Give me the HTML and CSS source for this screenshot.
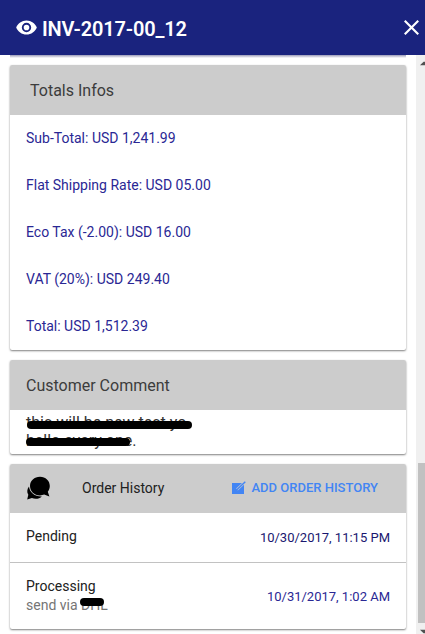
FILE: index.html
```
<!DOCTYPE html>
<html lang="en">
<head>
    <meta charset="UTF-8">
    <meta name="viewport" content="width=device-width, initial-scale=1.0">
    <title>Invoice</title>
    <link rel="stylesheet" href="styles.css">
</head>
<body>
    <div class="header">
        <svg class="eye" viewBox="1 4 22 16"><path d="M12 4.500C7 4.500 2.730 7.610 1 12c1.730 4.390 6 7.500 11 7.500s9.270-3.110 11-7.500c-1.730-4.390-6-7.500-11-7.500zM12 17a5 5 0 1 1 0-10 5 5 0 0 1 0 10zm0-8a3 3 0 1 0 0 6 3 3 0 0 0 0-6z"/></svg>
        <h1 class="title">INV-2017-00_12</h1>
        <svg class="close" viewBox="5 5 14 14"><path d="M19 6.410 17.590 5 12 10.590 6.410 5 5 6.410 10.590 12 5 17.590 6.410 19 12 13.410 17.590 19 19 17.590 13.410 12z"/></svg>
    </div>
    <div class="main">
        <div class="content">
            <div class="card totals">
                <div class="card-head indent">Totals Infos</div>
                <div class="total">Sub-Total: USD 1,241.99</div>
                <div class="total">Flat Shipping Rate: USD 05.00</div>
                <div class="total">Eco Tax (-2.00): USD 16.00</div>
                <div class="total">VAT (20%): USD 249.40</div>
                <div class="total">Total: USD 1,512.39</div>
            </div>
            <div class="card comment">
                <div class="card-head">Customer Comment</div>
                <div class="comment-text">
                    <div class="line"><span>this will be new test yo</span><i class="mark mark-one"></i></div>
                    <div class="line"><span>hello every one.</span><i class="mark mark-two"></i></div>
                </div>
            </div>
            <div class="card history">
                <div class="history-head">
                    <svg class="chat" viewBox="0 0 24 24">
                        <path d="M3 10.500C1 13.200.7 16.200 2.300 18.700L1.200 23.500l4.700-1.500c3.300 1.500 7.600.9 10-1.600C9 20.600 3.700 16.800 3 10.500z"/>
                        <path d="M14 .8C8.300.8 4 4.800 4 9.900s4.300 9.500 10 9.500c1.500 0 2.900-.3 4.200-.8l5.200 2-1.600-4.800c1.300-1.600 2-3.500 2-5.700C23.800 4.800 19.600.8 14 .8z"/>
                    </svg>
                    <div class="history-title">Order History</div>
                    <div class="add">
                        <svg class="edit" viewBox="0 0 14 13">
                            <path d="M0 2h12v11H0z" fill="#4285f4"/>
                            <path d="M5 8.500 13 1" stroke="#ccc" stroke-width="2.500"/>
                            <path d="M4 9.500 13.300.7" stroke="#4285f4" stroke-width="1.400"/>
                        </svg>
                        <span>ADD ORDER HISTORY</span>
                    </div>
                </div>
                <div class="row pending">
                    <div class="status">Pending</div>
                    <div class="date dark">10/30/2017, 11:15 PM</div>
                </div>
                <div class="row processing">
                    <div class="status">Processing
                        <div class="note">send via <span class="carrier">DHL<i class="mark mark-three"></i></span></div>
                    </div>
                    <div class="date">10/31/2017, 1:02 AM</div>
                </div>
            </div>
        </div>
        <div class="scrollbar">
            <svg class="arrow" viewBox="0 0 7 5"><path d="M0 5 5 0h2v5z"/></svg>
            <div class="thumb"></div>
            <svg class="arrow-down" viewBox="0 0 7 5"><path d="M0 0h7v5H5z"/></svg>
        </div>
    </div>
</body>
</html>
```
FILE: styles.css
```
*{
    margin: 0;
    padding: 0;
    box-sizing: border-box;
}
body{
    height: 634px;
    overflow: hidden;
    background-color: #fff;
    font-family: Roboto, Arial, sans-serif;
    font-size: 14px;
    color: #212121;
}
svg{
    display: block;
    flex: none;
}
.header{
    display: flex;
    align-items: center;
    height: 55px;
    padding: 0 6px 0 16px;
    background-color: #1a237e;
    color: #fff;
}
.eye{
    width: 21px;
    height: 15px;
    fill: #fff;
    margin-bottom: 1px;
}
.title{
    margin: 3px auto 0 5px;
    font-size: 20px;
    font-weight: 600;
    letter-spacing: -0.15px;
    line-height: 24px;
    white-space: nowrap;
}
.close{
    width: 15px;
    height: 15px;
    fill: #fff;
}
.main{
    display: flex;
    height: 579px;
}
.content{
    flex: 1;
    padding: 0 10px;
    background: linear-gradient(#9a9ab8, #fff 3px) no-repeat 10px 0 / 396px 3px;
}
.card{
    margin-top: 10px;
    background-color: #fff;
    border-radius: 2px;
    box-shadow: 0 1px 2px rgba(0,0,0,0.5);
}
.totals{
    height: 285px;
}
.card-head{
    height: 50px;
    padding-left: 16px;
    line-height: 51px;
    font-size: 16px;
    color: #3c3c3c;
    background-color: #ccc;
    border-radius: 2px 2px 0 0;
}
.indent{
    padding-left: 20px;
}
.total{
    height: 47px;
    padding-left: 16px;
    line-height: 47px;
    color: #2a2794;
}
.comment{
    height: 94px;
}
.comment-text{
    padding: 4px 16px;
    font-size: 16px;
    line-height: 18px;
    color: #333;
}
.line{
    position: relative;
    white-space: nowrap;
}
.mark{
    position: absolute;
    height: 8px;
    background-color: #000;
    border-radius: 4px;
}
.mark-one{
    left: 1px;
    top: 7px;
    width: 165px;
}
.mark-two{
    left: 0;
    top: 6px;
    width: 104px;
}
.history{
    height: 165px;
}
.history-head{
    display: flex;
    align-items: center;
    height: 49px;
    padding: 0 28px 2px 16px;
    background-color: #ccc;
    border-radius: 2px 2px 0 0;
}
.chat{
    width: 24px;
    height: 24px;
}
.history-title{
    margin: 0 auto 0 32px;
}
.add{
    display: flex;
    align-items: center;
    gap: 5px;
    font-size: 13px;
    font-weight: 500;
    color: #4285f4;
}
.edit{
    width: 14px;
    height: 13px;
    fill: none;
}
.row{
    display: flex;
    align-items: center;
    justify-content: space-between;
    padding: 0 16px;
}
.pending{
    height: 50px;
    padding-bottom: 2px;
    border-bottom: 1px solid #c2c2c2;
}
.processing{
    height: 66px;
}
.status{
    line-height: 19px;
}
.note{
    color: #757575;
}
.carrier{
    position: relative;
}
.mark-three{
    left: -1px;
    top: 1px;
    width: 24px;
}
.date{
    font-size: 13px;
    padding-top: 1px;
    color: #2a2794;
}
.dark{
    color: #1a1770;
}
.scrollbar{
    display: flex;
    flex-direction: column;
    align-items: flex-end;
    width: 9px;
    padding-top: 6px;
    background-color: #f0f0f0;
}
.arrow,
.arrow-down{
    width: 5px;
    height: 5px;
    fill: #505050;
}
.thumb{
    width: 7px;
    height: 161px;
    margin-top: 397px;
    margin-bottom: 6px;
    background-color: #c1c1c1;
}
```
